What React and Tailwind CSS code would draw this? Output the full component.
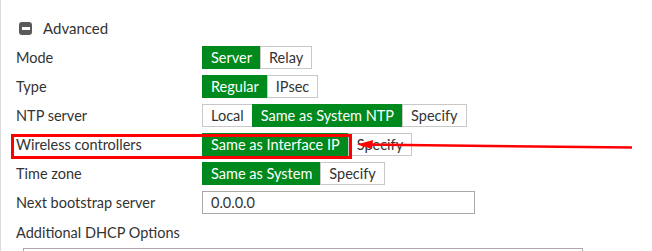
import React from "react";

const GREEN = "bg-[#008a1e] text-white border-[#008a1e]";
const PLAIN = "bg-white text-[#333] border-[#c8c8c8]";

function Toggle({ options, active }) {
  return (
    <div className="flex h-[23px]">
      {options.map((o, i) => (
        <div
          key={o}
          className={
            "flex items-center px-[8px] border whitespace-nowrap " +
            (i > 0 ? "-ml-px " : "") +
            (i === active ? GREEN : PLAIN)
          }
        >
          {o}
        </div>
      ))}
    </div>
  );
}

function Row({ label, children }) {
  return (
    <div className="flex items-center h-[23px]">
      <div className="w-[186px] shrink-0">{label}</div>
      {children}
    </div>
  );
}

export default function App() {
  return (
    <div
      className="relative w-[652px] h-[251px] overflow-hidden bg-white text-[14.5px] text-[#333] border-l border-[#dcdcdc]"
      style={{ fontFamily: "Lato, 'Liberation Sans', sans-serif" }}
    >
      {/* header */}
      <div className="flex items-center pl-[18px] pt-[21px] h-[36px]">
        <div className="w-[13px] h-[13px] rounded-[3px] bg-[#5a5a5a] flex items-center justify-center">
          <div className="w-[8px] h-[3px] bg-white" />
        </div>
        <span className="ml-[11px] text-[15px]">Advanced</span>
      </div>

      <div className="flex flex-col gap-[6px] pl-[15px] pt-[10px]">
        <Row label="Mode">
          <Toggle options={["Server", "Relay"]} active={0} />
        </Row>
        <Row label="Type">
          <Toggle options={["Regular", "IPsec"]} active={0} />
        </Row>
        <Row label="NTP server">
          <Toggle options={["Local", "Same as System NTP", "Specify"]} active={1} />
        </Row>
        <Row label="Wireless controllers">
          <Toggle options={["Same as Interface IP", "Specify"]} active={0} />
        </Row>
        <Row label="Time zone">
          <Toggle options={["Same as System", "Specify"]} active={0} />
        </Row>
        <Row label="Next bootstrap server">
          <div className="w-[273px] h-[23px] border border-[#a9a9a9] flex items-center px-[8px]">
            0.0.0.0
          </div>
        </Row>
        <div className="h-[26px] flex items-center">Additional DHCP Options</div>
      </div>

      <div className="ml-[22px] mt-[2px] w-[560px] h-[20px] border border-[#aaa]" />

      {/* annotation overlay */}
      <div className="absolute left-[10px] top-[134px] w-[341px] h-[25px] border-[3px] border-[#ff0000]" />
      <svg className="absolute left-0 top-0" width="652" height="251">
        <line x1="631" y1="147.5" x2="362" y2="144.5" stroke="#ff0000" strokeWidth="2.5" />
        <polygon points="356,144.5 372,140 371,149" fill="#ff0000" />
      </svg>
    </div>
  );
}
